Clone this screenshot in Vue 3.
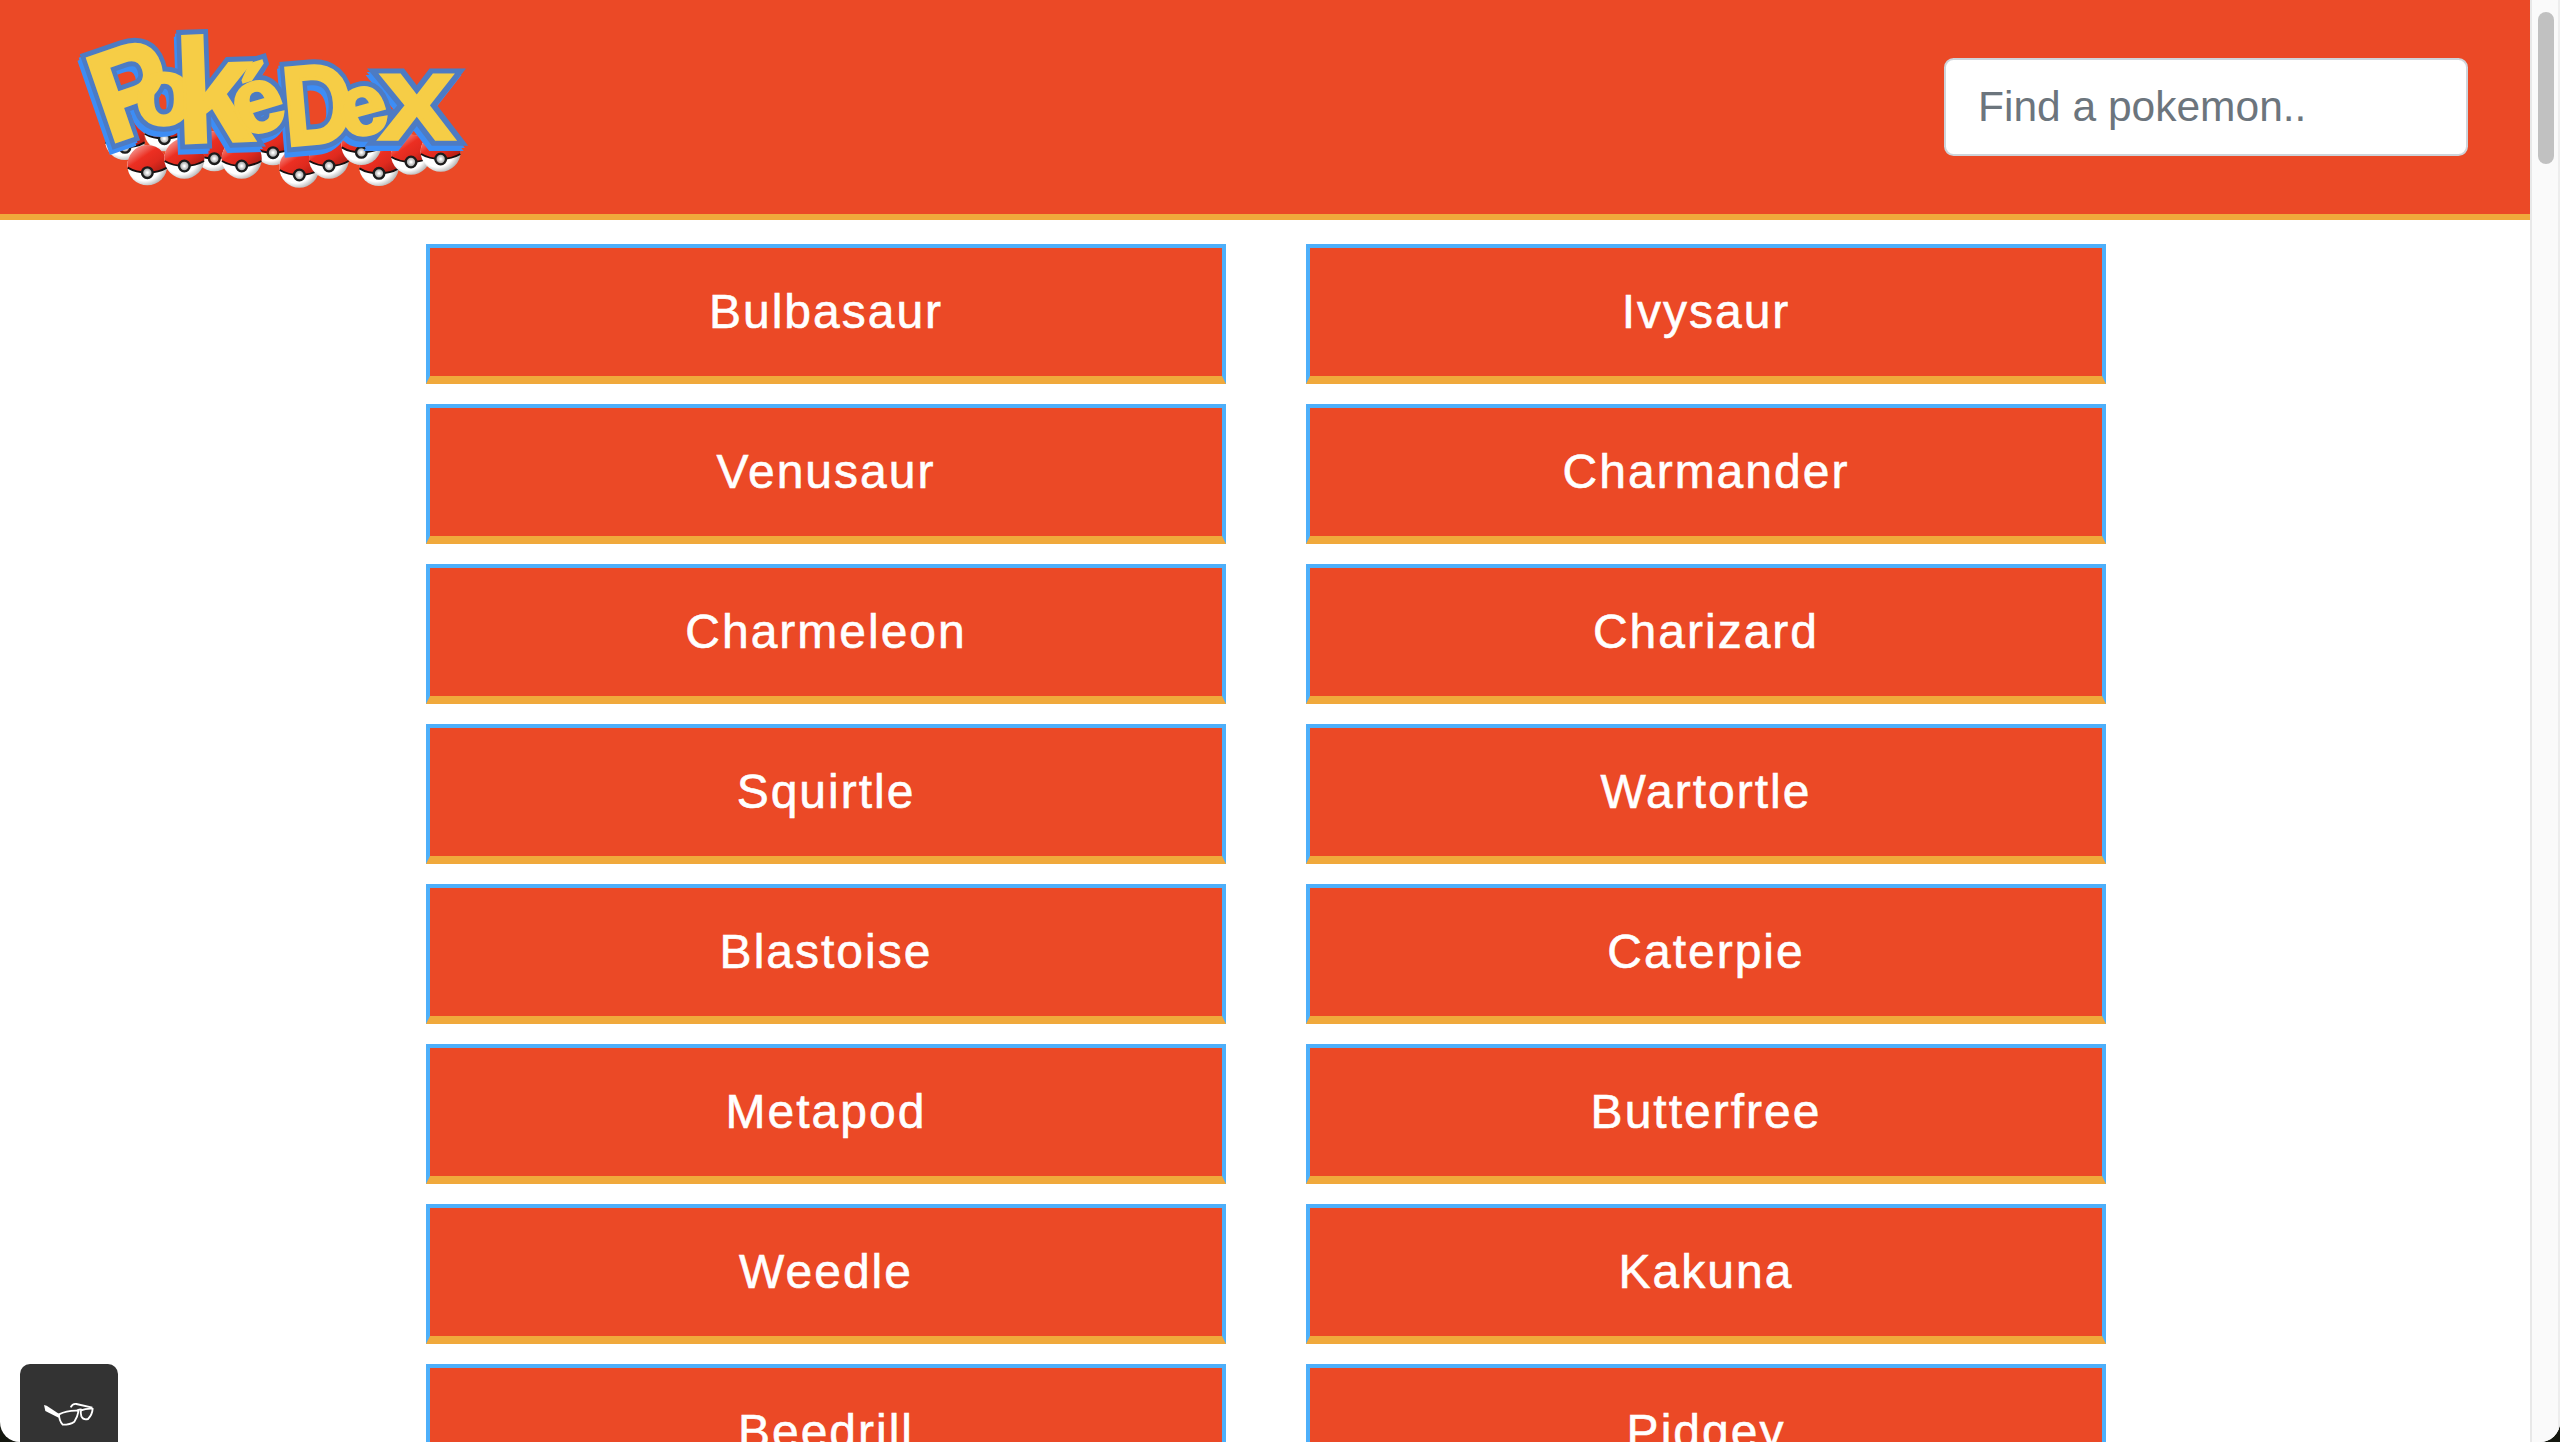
<script setup>
const names = [
  'Bulbasaur', 'Ivysaur', 'Venusaur', 'Charmander', 'Charmeleon', 'Charizard',
  'Squirtle', 'Wartortle', 'Blastoise', 'Caterpie', 'Metapod', 'Butterfree',
  'Weedle', 'Kakuna', 'Beedrill', 'Pidgey',
]

// Button centre of every ball under the wordmark, back to front
const balls = [
  [225, 412], [343, 386], [493, 446], [669, 428], [292, 488], [403, 468], [575, 468],
  [748, 495], [837, 468], [987, 490], [934, 427], [1083, 456], [1172, 447],
]
</script>

<template>
  <div class="window">
    <div class="page">
      <header class="topbar">
        <svg class="logo" viewBox="0 0 1320 600" role="img" aria-label="PokéDex">
          <defs>
            <linearGradient id="side" gradientUnits="userSpaceOnUse" x1="0" y1="100" x2="0" y2="440">
              <stop offset="0" stop-color="#3d8df5" />
              <stop offset="0.5" stop-color="#3274cc" />
              <stop offset="1" stop-color="#173f78" />
            </linearGradient>
            <linearGradient id="red" x1="0" y1="0" x2="1" y2="1">
              <stop offset="0" stop-color="#ef4038" />
              <stop offset="0.18" stop-color="#f28880" />
              <stop offset="0.42" stop-color="#ec2f22" />
              <stop offset="0.65" stop-color="#df2a1e" />
              <stop offset="1" stop-color="#9c1a12" />
            </linearGradient>
            <radialGradient id="white" cx="0.42" cy="0.45" r="0.58">
              <stop offset="0.75" stop-color="#fff" />
              <stop offset="1" stop-color="#b9b9b9" />
            </radialGradient>
            <radialGradient id="knob">
              <stop offset="0.1" stop-color="#fff" />
              <stop offset="1" stop-color="#8d8d8d" />
            </radialGradient>
            <g id="ball">
              <circle cy="-22" r="60" fill="url(#white)" />
              <path d="M-59.500-15A60 60 0 1 1 59.500-15Q34 0 0 0T-59.500-15Z" fill="url(#red)" />
              <path d="M-59-15Q-34 0 0 0T59-15" fill="none" stroke="#160f0f" stroke-width="6" />
              <circle r="16" fill="url(#knob)" stroke="#1c1c1c" stroke-width="7" />
            </g>
            <g id="word">
              <text transform="translate(176 402) rotate(-19) scale(.92 1)" font-size="382">P</text>
              <text transform="translate(256 343)" font-size="282">o</text>
              <text transform="translate(380 399) rotate(-2) scale(.95 1)" font-size="440">k</text>
              <text transform="translate(574 383) rotate(-17)" font-size="275">é</text>
              <text transform="translate(708 408) rotate(-5) scale(.86 1)" font-size="338">D</text>
              <text transform="translate(888 389) rotate(-15)" font-size="258">e</text>
              <text transform="translate(987 386) scale(1.220 1)" font-size="278">X</text>
            </g>
          </defs>
          <use v-for="([x, y], i) in balls" :key="i" href="#ball" :x="x" :y="y" />
          <g class="side">
            <use href="#word" x="-9" y="18" />
            <use href="#word" x="-5" y="9" />
          </g>
          <use class="rim" href="#word" />
          <use class="face" href="#word" />
        </svg>
        <input class="search" type="text" placeholder="Find a pokemon.." />
      </header>
      <main class="grid">
        <div v-for="name in names" :key="name" class="card">{{ name }}</div>
      </main>
      <button class="reader" aria-label="Reader">
        <svg viewBox="0 0 150 66">
          <path d="M0 0 4 18 44 38 49 29 8 2Z" fill="#fff" />
          <g fill="none" stroke="#fff" stroke-width="5.500" stroke-linejoin="round">
            <path d="M45 28Q70 15 104 17Q101 35 91 50Q79 59 56 59Q45 47 45 28Z" />
            <path d="M111 16Q125 10 146 11Q145 29 132 42Q118 46 112 34Q109 25 111 16Z" />
            <path d="M98 18Q106 10 116 15M80 7Q86-5 97-3L145 8" />
          </g>
        </svg>
      </button>
    </div>
    <div class="track"><div class="thumb"></div></div>
  </div>
</template>

<style>
body {
  background: #14170f;
}
</style>

<style scoped>
.window {
  display: flex;
  width: 2560px;
  height: 1442px;
  overflow: hidden;
  border-radius: 0 0 20px 20px;
  background: #fff;
  font-family: "Liberation Sans", Arial, sans-serif;
}
.page {
  position: relative;
  flex: 1;
  overflow: hidden;
}
.topbar {
  display: flex;
  align-items: center;
  justify-content: space-between;
  box-sizing: border-box;
  height: 220px;
  padding: 0 62px 0 50px;
  border-bottom: 6px solid #f0a93b;
  background: #eb4926;
}
.logo {
  width: 440px;
  height: 200px;
  margin-top: 6px;
  font-family: "Liberation Sans", Arial, sans-serif;
  font-weight: 700;
}
.side {
  fill: url(#side);
  stroke: url(#side);
  stroke-width: 36;
}
.rim {
  fill: #4d7bc3;
  stroke: #4d7bc3;
  stroke-width: 40;
}
.face {
  fill: #f6cd46;
  stroke: #f6cd46;
  stroke-width: 10;
}
.search {
  box-sizing: border-box;
  width: 524px;
  height: 98px;
  padding: 0 32px;
  border: 2px solid #ced4da;
  border-radius: 9.600px;
  background: #fff;
  font-family: inherit;
  font-size: 42.500px;
}
.search::placeholder {
  color: #6c757d;
  opacity: 1;
}
.grid {
  display: grid;
  grid-template-columns: 800px 800px;
  gap: 20px 80px;
  padding: 24px 0 0 426px;
}
.card {
  box-sizing: border-box;
  height: 140px;
  border: 4px solid #4daffa;
  border-bottom: 8px solid #f0a93b;
  background: #eb4926;
  color: #fff;
  font-size: 48px;
  letter-spacing: 2px;
  line-height: 128px;
  text-align: center;
  -webkit-text-stroke: 0.600px #fff;
}
.reader {
  position: absolute;
  left: 20px;
  bottom: 0;
  width: 98px;
  height: 78px;
  padding: 25px 24px 0;
  border: 0;
  border-radius: 10px 10px 0 0;
  background: #333;
}
.reader svg {
  display: block;
  width: 50px;
  height: 22px;
  overflow: visible;
}
.track {
  box-sizing: border-box;
  width: 30px;
  padding: 12px 0 0 6px;
  border-left: 2px solid #e8e8e8;
  border-right: 2px solid #ededed;
  background: #fafafa;
}
.thumb {
  width: 16px;
  height: 152px;
  border-radius: 8px;
  background: #c1c1c1;
}
</style>
